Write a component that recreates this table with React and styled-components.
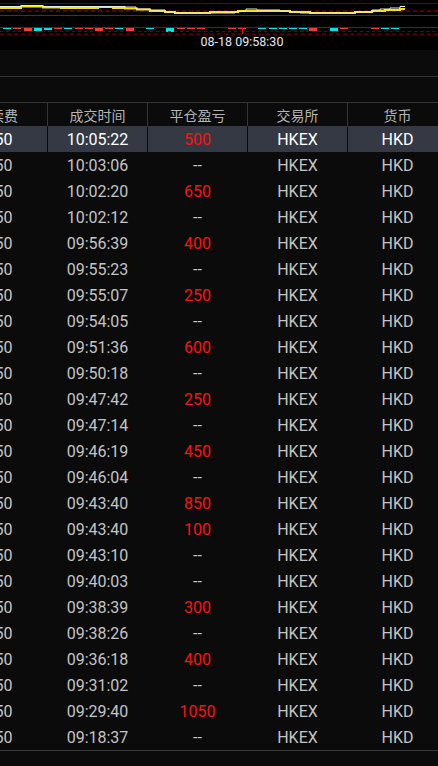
import React from "react";
import styled, { createGlobalStyle } from "styled-components";

const GlobalStyle = createGlobalStyle`
  html, body {
    margin: 0;
    padding: 0;
    background: #0b0b0b;
    overflow: hidden;
  }
`;

const trades = [
  { time: "10:05:22", pnl: "500" },
  { time: "10:03:06", pnl: "--" },
  { time: "10:02:20", pnl: "650" },
  { time: "10:02:12", pnl: "--" },
  { time: "09:56:39", pnl: "400" },
  { time: "09:55:23", pnl: "--" },
  { time: "09:55:07", pnl: "250" },
  { time: "09:54:05", pnl: "--" },
  { time: "09:51:36", pnl: "600" },
  { time: "09:50:18", pnl: "--" },
  { time: "09:47:42", pnl: "250" },
  { time: "09:47:14", pnl: "--" },
  { time: "09:46:19", pnl: "450" },
  { time: "09:46:04", pnl: "--" },
  { time: "09:43:40", pnl: "850" },
  { time: "09:43:40", pnl: "100" },
  { time: "09:43:10", pnl: "--" },
  { time: "09:40:03", pnl: "--" },
  { time: "09:38:39", pnl: "300" },
  { time: "09:38:26", pnl: "--" },
  { time: "09:36:18", pnl: "400" },
  { time: "09:31:02", pnl: "--" },
  { time: "09:29:40", pnl: "1050" },
  { time: "09:18:37", pnl: "--" },
];

// price / average steps for the mini chart
const price = [
  [0, 6.5], [21, 5.5], [43, 6.5], [75, 6.5], [98, 6.5], [125, 7],
  [136, 9], [150, 10], [165, 12], [175, 13], [220, 13], [235, 11.5],
  [246, 9], [257, 10], [280, 11], [290, 12], [300, 13], [345, 13],
  [355, 12], [372, 10], [380, 9], [390, 8], [400, 6.5], [405, 6.5],
];
const average = [
  [0, 8], [15, 8], [21, 6.5], [43, 7.5], [61, 8], [98, 7], [113, 8],
  [125, 8.5], [137, 9.5], [150, 11], [165, 12], [175, 13], [190, 13],
  [210, 12], [238, 11], [290, 12], [310, 13], [345, 13], [355, 12],
  [372, 11], [385, 10], [400, 9], [405, 9],
];

const bars = [
  [3, "c", 1], [13, "r", 1], [24, "r", 3], [34, "c", 3], [44, "c", 2],
  [54, "r", 1], [64, "c", 1], [75, "r", 1], [85, "r", 1], [95, "r", 3],
  [105, "r", 1], [115, "c", 1], [126, "r", 3], [146, "c", 1], [166, "c", 4],
  [177, "r", 1], [187, "r", 1], [197, "r", 1], [228, "r", 1], [238, "r", 1],
  [258, "c", 1], [269, "c", 1], [279, "c", 1], [289, "c", 1], [299, "c", 1],
  [309, "r", 3], [330, "c", 3], [340, "r", 1], [371, "r", 1], [381, "c", 1],
  [391, "c", 1],
];

const steps = (pts) =>
  pts
    .map(([x, y], i) => (i === 0 ? `M${x} ${y}` : `H${x} V${y}`))
    .join(" ");

function MiniChart() {
  return (
    <svg width="438" height="36" viewBox="0 0 438 36">
      <line x1="0" y1="3.5" x2="438" y2="3.5" stroke="#6e0000" />
      <line x1="0" y1="11" x2="438" y2="11" stroke="#5c0000" strokeWidth="2" strokeDasharray="4 3" />
      <path d={steps(average)} fill="none" stroke="#f4e600" strokeWidth="2" />
      <path d={steps(price)} fill="none" stroke="#e8e8e8" strokeWidth="1" />
      <line x1="0" y1="15.5" x2="438" y2="15.5" stroke="#b00000" />
      <line x1="0" y1="27.5" x2="438" y2="27.5" stroke="#a00000" />
      {bars.map(([x, c, h]) => (
        <rect
          key={x}
          x={x}
          y={28}
          width={8}
          height={h}
          fill={c === "c" ? "#00e4e8" : "#f23a3a"}
        />
      ))}
      <line x1="0" y1="31.5" x2="438" y2="31.5" stroke="#6a0000" strokeDasharray="3 3" />
      <line x1="0" y1="34.5" x2="438" y2="34.5" stroke="#5a0000" strokeWidth="2" strokeDasharray="4 3" />
      <line x1="242.5" y1="28" x2="242.5" y2="34" stroke="#e01010" />
    </svg>
  );
}

function App() {
  return (
    <Page>
      <GlobalStyle />
      <ChartStrip>
        <MiniChart />
        <CrossLabel>08-18 09:58:30</CrossLabel>
      </ChartStrip>
      <Toolbar />
      <TableWrap>
        <Table>
          <HeaderRow>
            <HeaderCell>手续费</HeaderCell>
            <HeaderCell>成交时间</HeaderCell>
            <HeaderCell>平仓盈亏</HeaderCell>
            <HeaderCell>交易所</HeaderCell>
            <HeaderCell>货币</HeaderCell>
          </HeaderRow>
          {trades.map((t, i) => (
            <Row key={i} $active={i === 0}>
              <Cell>2.50</Cell>
              <Cell>{t.time}</Cell>
              <Cell $red={t.pnl !== "--"}>{t.pnl}</Cell>
              <Cell>HKEX</Cell>
              <Cell>HKD</Cell>
            </Row>
          ))}
        </Table>
      </TableWrap>
    </Page>
  );
}

export default App;

const Page = styled.div`
  width: 438px;
  height: 766px;
  background: #0b0b0b;
  overflow: hidden;
`;

const ChartStrip = styled.div`
  position: relative;
  height: 50px;
  background: #000;

  svg {
    display: block;
  }
`;

const CrossLabel = styled.div`
  position: absolute;
  left: 242px;
  top: 34px;
  transform: translateX(-50%);
  font-family: Roboto, "Liberation Sans", sans-serif;
  font-size: 12.5px;
  line-height: 16px;
  color: #e2eaf6;
  white-space: nowrap;
`;

const Toolbar = styled.div`
  height: 26px;
  border-bottom: 1px solid #353535;
  margin-bottom: 25px;
`;

const TableWrap = styled.div`
  width: 438px;
  overflow: hidden;
`;

const Table = styled.div`
  width: 500px;
  margin-left: -53px;
  border-bottom: 1px solid #3a3a3a;
`;

const HeaderRow = styled.div`
  display: grid;
  grid-template-columns: repeat(5, 100px);
  height: 23px;
  border-top: 1px solid #353535;
`;

const HeaderCell = styled.div`
  display: flex;
  align-items: center;
  justify-content: center;
  font-family: "Noto Sans CJK SC", "Liberation Sans", sans-serif;
  font-size: 14px;
  color: #b4b4b4;

  & + & {
    border-left: 1px solid #353535;
  }
`;

const Row = styled.div`
  display: grid;
  grid-template-columns: repeat(5, 100px);
  height: 26px;
  background: ${(p) => (p.$active ? "#343944" : "transparent")};
  color: ${(p) => (p.$active ? "#ffffff" : "#c4c4c4")};
`;

const Cell = styled.div`
  display: flex;
  align-items: center;
  justify-content: center;
  font-family: Roboto, "Liberation Sans", sans-serif;
  font-size: 16px;
  color: ${(p) => (p.$red ? "#ff1010" : "inherit")};

  & + & {
    border-left: 1px solid #0b0b0b;
  }
`;
